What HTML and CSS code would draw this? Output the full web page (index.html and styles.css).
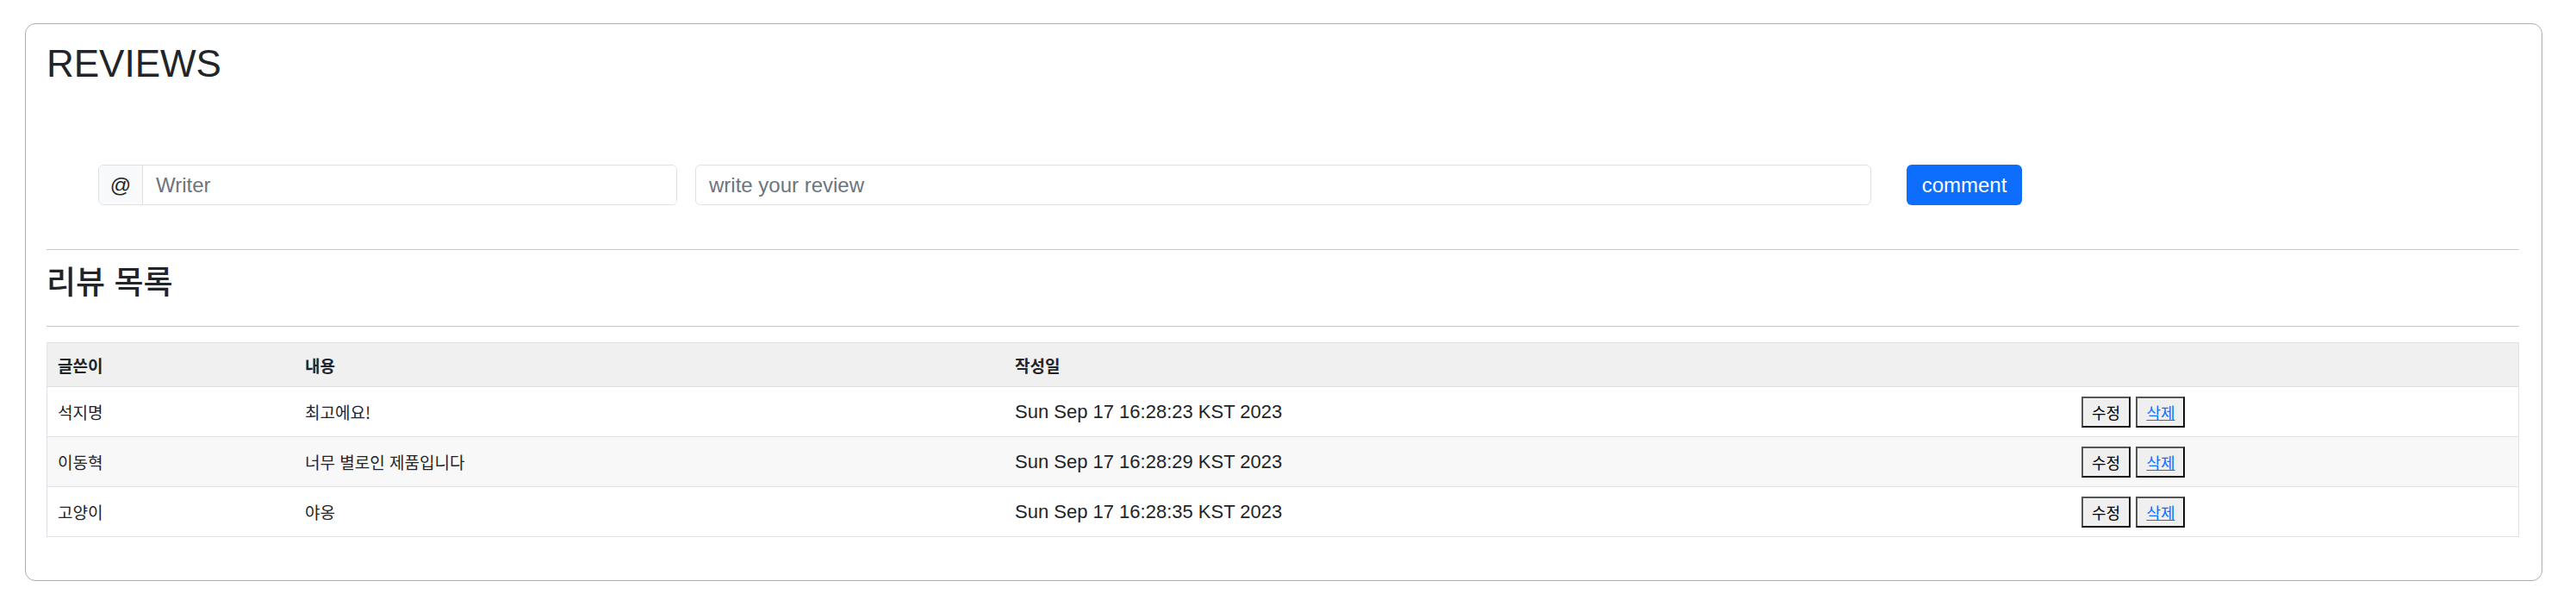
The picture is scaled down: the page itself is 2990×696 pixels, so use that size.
FILE: index.html
```html
<!DOCTYPE html>
<html lang="ko">
<head>
<meta charset="utf-8">
<title>Reviews</title>
<link rel="stylesheet" href="styles.css">
</head>
<body>
<div class="card">
  <h1 class="title">REVIEWS</h1>
  <form class="review-form">
    <div class="writer-group">
      <span class="addon">@</span>
      <input class="writer-input" type="text" placeholder="Writer">
    </div>
    <input class="review-input" type="text" placeholder="write your review">
    <button class="submit" type="button">comment</button>
  </form>
  <hr class="divider">
  <h2 class="list-title">리뷰 목록</h2>
  <hr class="divider divider-bottom">
  <table class="review-table">
    <thead>
      <tr>
        <th class="col-writer">글쓴이</th>
        <th class="col-content">내용</th>
        <th class="col-date">작성일</th>
        <th class="col-actions"></th>
      </tr>
    </thead>
    <tbody>
      <tr>
        <td class="ko">석지명</td>
        <td class="ko">최고에요!</td>
        <td class="date">Sun Sep 17 16:28:23 KST 2023</td>
        <td><button class="act">수정</button> <button class="act"><a href="#">삭제</a></button></td>
      </tr>
      <tr class="striped">
        <td class="ko">이동혁</td>
        <td class="ko">너무 별로인 제품입니다</td>
        <td class="date">Sun Sep 17 16:28:29 KST 2023</td>
        <td><button class="act">수정</button> <button class="act"><a href="#">삭제</a></button></td>
      </tr>
      <tr>
        <td class="ko">고양이</td>
        <td class="ko">야옹</td>
        <td class="date">Sun Sep 17 16:28:35 KST 2023</td>
        <td><button class="act">수정</button> <button class="act"><a href="#">삭제</a></button></td>
      </tr>
    </tbody>
  </table>
</div>
</body>
</html>
```

FILE: styles.css
```css
html, body {
  margin: 0;
  padding: 0;
  background: #ffffff;
}

body {
  font-family: "Liberation Sans", "Noto Sans CJK KR", sans-serif;
  color: #212529;
}

.card {
  margin: 27px 39px 21px 29px;
  border: 1px solid #adadad;
  border-radius: 12px;
  padding: 19px 26px 50px 24px;
}

.title {
  margin: 0;
  font-size: 44px;
  line-height: 53px;
  font-weight: 400;
}

.review-form {
  display: flex;
  margin: 91px 0 0 60px;
  height: 47px;
}

.writer-group {
  display: flex;
  width: 672px;
  box-sizing: border-box;
  border: 1px solid #dee2e6;
  border-radius: 6px;
  overflow: hidden;
}

.addon {
  width: 51px;
  box-sizing: border-box;
  background: #f8f9fa;
  border-right: 1px solid #dee2e6;
  display: flex;
  align-items: center;
  justify-content: center;
  font-size: 24px;
  color: #212529;
}

.writer-input {
  flex: 1;
  border: none;
  outline: none;
  padding: 0 15px;
  font-family: inherit;
  font-size: 24px;
  color: #212529;
  background: #ffffff;
  min-width: 0;
}

.review-input {
  margin-left: 21px;
  width: 1365px;
  box-sizing: border-box;
  border: 1px solid #dee2e6;
  border-radius: 6px;
  padding: 0 15px;
  font-family: inherit;
  font-size: 24px;
  outline: none;
}

.writer-input::placeholder,
.review-input::placeholder {
  color: #6c757d;
}

.submit {
  margin-left: 41px;
  width: 134px;
  border: none;
  border-radius: 6px;
  background: #0d6efd;
  color: #ffffff;
  font-family: inherit;
  font-size: 24px;
  padding: 0;
}

.divider {
  margin: 51px 0 0;
  border: 0;
  border-top: 1px solid #c8c9ca;
  height: 0;
}

.divider-bottom {
  margin-top: 0;
}

.list-title {
  margin: 0 0 17px;
  font-family: "Noto Sans CJK KR", sans-serif;
  font-size: 37px;
  font-weight: 500;
  line-height: 71px;
}

.review-table {
  margin-top: 18px;
  width: 100%;
  border-collapse: collapse;
  border: 1px solid #dee2e6;
  table-layout: fixed;
}

.col-writer { width: 263px; }
.col-content { width: 800px; }
.col-date { width: 1214px; }

.review-table th {
  height: 50px;
  padding: 0 12px;
  text-align: left;
  background: #f0f0f0;
  font-family: "Noto Sans CJK KR", sans-serif;
  font-size: 19px;
  font-weight: 700;
  color: #212529;
  border-bottom: 1px solid #dee2e6;
}

.review-table td {
  height: 57px;
  padding: 0 12px;
  border-bottom: 1px solid #dee2e6;
  vertical-align: middle;
  white-space: nowrap;
}

.review-table tr.striped td {
  background: #f8f8f8;
}

.ko {
  font-family: "Noto Sans CJK KR", sans-serif;
  font-size: 19px;
  font-weight: 400;
  color: #212529;
}

.date {
  font-size: 22px;
  color: #212529;
}

.act {
  width: 57px;
  height: 36px;
  padding: 0;
  background: #efefef;
  border: 2px solid;
  border-color: #555555 #111111 #111111 #555555;
  font-family: "Noto Sans CJK KR", sans-serif;
  font-size: 18px;
  font-weight: 400;
  color: #000000;
  vertical-align: middle;
}

.act + .act {
  margin-left: 2px;
}

.act a {
  color: #0d6efd;
  text-decoration: underline;
}
```
